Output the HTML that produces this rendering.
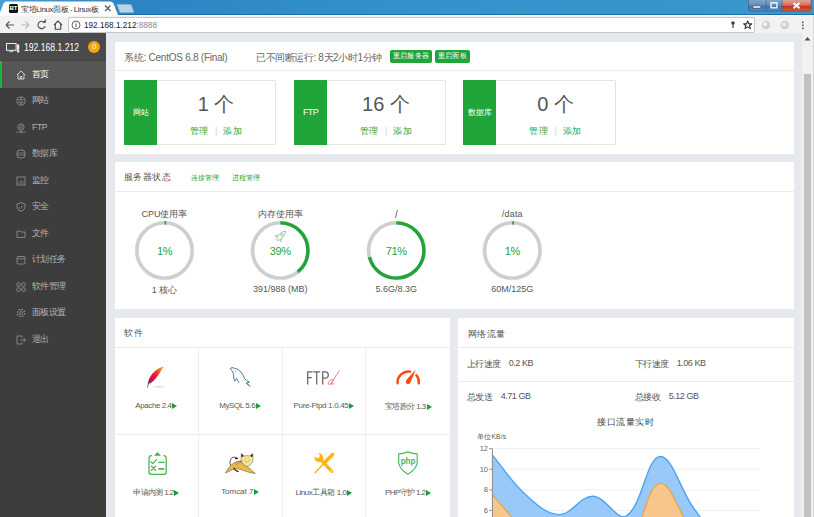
<!DOCTYPE html>
<html><head><meta charset="utf-8">
<style>
*{box-sizing:border-box;margin:0;padding:0}
html,body{width:814px;height:517px;overflow:hidden;background:#e6e9ee;font-family:"Liberation Sans",sans-serif;}
.a{position:absolute;white-space:nowrap}
#title{position:absolute;left:0;top:0;width:814px;height:15px;background:linear-gradient(90deg,#4c9cd4 0,#2d84c3 130px,#3493ca 420px,#3898cd 814px);border-bottom:1px solid #1e6fa5}
#toolbar{position:absolute;left:0;top:14.5px;width:814px;height:18.5px;background:#f2f2f2;border-top:1px solid #fafafa}
#addr{position:absolute;left:68px;top:17px;width:687px;height:16px;background:#fff;border:1px solid #c6c6c6;border-radius:2px}
#side{position:absolute;left:0;top:33px;width:106px;height:484px;background:#3d3d3d}
#sidehead{position:absolute;left:0;top:0;width:106px;height:28px;background:#4a4a4a;border-bottom:1px solid #444}
.mi{position:absolute;left:0;width:106px;height:26.5px;color:#b4b4b4;font-size:8.5px;letter-spacing:-0.75px}
.mi span{position:absolute;left:32px;top:7.8px}
.mi svg{position:absolute;left:16px;top:8.5px}
.card{position:absolute;background:#fff}
.hdiv{position:absolute;left:0;right:0;height:1px;background:#ebebeb}
.green{color:#20a53a}
.btn{position:absolute;background:#20a53a;color:#fff;font-size:7px;letter-spacing:0.3px;border-radius:2px;text-align:center;line-height:12.5px;height:12.5px;top:50.2px}
.stat{position:absolute;top:80px;width:152px;height:65px;border:1px solid #e4e4e4;border-radius:1px;background:#fff}
.stat .g{position:absolute;left:-1px;top:-1px;width:33px;height:65px;background:#20a53a;color:#fff;font-size:8px;letter-spacing:0px;text-align:center;line-height:65px}
.stat .n{position:absolute;left:32px;right:0;top:10px;text-align:center;font-size:20px;color:#555}
.stat .l{position:absolute;left:32px;right:0;top:44px;text-align:center;font-size:9px;letter-spacing:0.5px;color:#20a53a}
.gauge{position:absolute;top:221px;width:59px;height:59px}
.glbl{position:absolute;width:116px;text-align:center;font-size:9px;color:#555}
.gpct{position:absolute;width:116px;text-align:center;font-size:11px;color:#20a53a;letter-spacing:-0.35px}
.sw{position:absolute;width:83.75px;height:87.2px;border-right:1px solid #efeef8;border-bottom:1px solid #ecebf3}
.sw.r2 .t{top:52.2px}
.sw .t{position:absolute;left:0;right:0;top:53px;text-align:center;font-size:8px;color:#5a5a5a}
.tri{display:inline-block;width:0;height:0;margin-left:0.8px;border-left:5.8px solid #1a9f35;border-top:3.4px solid transparent;border-bottom:3.4px solid transparent;vertical-align:-1px}
.net{position:absolute;font-size:8.5px;color:#555;letter-spacing:-0.3px}
</style></head><body>

<!-- browser chrome -->
<div id="title"></div>
<svg class="a" style="left:0;top:0" width="814" height="15">
  <path d="M-1 15 L3.5 3.5 Q4.5 1.5 7 1.5 L110 1.5 Q112.5 1.5 113.5 3.5 L118 15 Z" fill="#fff"/>
  <path d="M117 4.5 L131 4.5 L134 12.5 L120 12.5 Z" fill="#b9d3ea" stroke="#8fb5d6" stroke-width="0.7"/>
  <defs>
<linearGradient id="wb" x1="0" y1="0" x2="0" y2="1"><stop offset="0" stop-color="#7fa6cc"/><stop offset="0.5" stop-color="#5f8cb8"/><stop offset="0.55" stop-color="#3f73a8"/><stop offset="1" stop-color="#4f86bc"/></linearGradient>
<linearGradient id="wr" x1="0" y1="0" x2="0" y2="1"><stop offset="0" stop-color="#e0a396"/><stop offset="0.5" stop-color="#d26a58"/><stop offset="0.55" stop-color="#c2321d"/><stop offset="1" stop-color="#d8553a"/></linearGradient>
</defs>
<path d="M748 0 V9.5 Q748 11.5 750 11.5 H809.5 Q811.5 11.5 811.5 9.5 V0 Z" fill="#3b5f86"/>
<rect x="748.7" y="0" width="17" height="10.8" fill="url(#wb)"/>
<rect x="766.4" y="0" width="15.4" height="10.8" fill="url(#wb)"/>
<rect x="782.4" y="0" width="28.4" height="10.8" fill="url(#wr)"/>
<rect x="753" y="6" width="7.5" height="2" fill="#fff" stroke="#333" stroke-width="0.4"/>
<rect x="771" y="2.8" width="6" height="5" fill="none" stroke="#fff" stroke-width="1.3"/>
<path d="M793.5 3 L799.5 8.3 M799.5 3 L793.5 8.3" stroke="#fff" stroke-width="1.9"/>
</svg>
<div class="a" style="left:9px;top:3.5px;width:9px;height:9px;background:#111;border-radius:1.5px;color:#fff;font-size:6px;font-weight:bold;line-height:9px;text-align:center">BT</div>
<div class="a" style="left:21px;top:3.6px;font-size:8px;color:#333;letter-spacing:-0.45px">宝塔Linux面板 - Linux板</div>
<svg class="a" style="left:103px;top:3px" width="10" height="10"><path d="M2 2.5 L7.5 8 M7.5 2.5 L2 8" stroke="#555" stroke-width="1.1"/></svg>

<div id="toolbar"></div>
<svg class="a" style="left:0;top:15px" width="68" height="18">
  <path d="M6 10 L14 10 M6 10 L9.5 6.5 M6 10 L9.5 13.5" stroke="#555" stroke-width="1.2" fill="none"/>
  <path d="M29 10 L21 10 M29 10 L25.5 6.5 M29 10 L25.5 13.5" stroke="#bbb" stroke-width="1.2" fill="none"/>
  <path d="M44.6 7.6 A3.7 3.7 0 1 0 45.2 11.2" stroke="#555" stroke-width="1.2" fill="none"/>
  <path d="M42.2 7.8 L45.9 7.8 L45.9 4.1 Z" fill="#555"/>
  <path d="M54 10 L58 6 L62 10 M55.3 9 L55.3 14.3 L60.7 14.3 L60.7 9" stroke="#444" stroke-width="1.1" fill="none"/>
</svg>
<div id="addr"></div>
<svg class="a" style="left:71px;top:20px" width="10" height="10"><circle cx="5" cy="5" r="4" fill="none" stroke="#555" stroke-width="0.9"/><rect x="4.5" y="4" width="1" height="3.2" fill="#555"/><rect x="4.5" y="2.5" width="1" height="0.9" fill="#555"/></svg>
<div class="a" style="left:84px;top:19.1px;font-size:9.6px;color:#222;transform:scaleX(0.855);transform-origin:0 0">192.168.1.212<span style="color:#888">:8888</span></div>
<svg class="a" style="left:725px;top:18px" width="89" height="14">
  <circle cx="8" cy="5" r="1.8" fill="#444"/><rect x="7.4" y="5" width="1.2" height="5" fill="#444"/>
  <path d="M22.7 3 L23.8 5.9 L26.8 5.9 L24.5 7.7 L25.4 10.6 L22.7 8.9 L20 10.6 L20.9 7.7 L18.6 5.9 L21.6 5.9 Z" fill="none" stroke="#333" stroke-width="1.1" stroke-linejoin="round"/>
  <circle cx="41" cy="7" r="4.3" fill="#cfcfcf"/><circle cx="40" cy="6" r="2" fill="#f5f5f5"/>
  <circle cx="59.7" cy="7" r="4.3" fill="#cfcfcf"/><circle cx="59" cy="6.5" r="2.2" fill="#e8e8e8"/>
  <rect x="77" y="3.5" width="1.6" height="1.6" fill="#555"/><rect x="77" y="6.5" width="1.6" height="1.6" fill="#555"/><rect x="77" y="9.5" width="1.6" height="1.6" fill="#555"/>
</svg>
<div class="a" style="left:813px;top:15px;width:1px;height:502px;background:#d8d8d8"></div>

<!-- sidebar -->
<div id="side">
  <div id="sidehead">
    <svg class="a" style="left:6px;top:9.6px" width="14" height="10"><rect x="0.5" y="0.5" width="9.6" height="6.8" fill="none" stroke="#eee" stroke-width="1"/><rect x="3.4" y="8.2" width="3.8" height="0.9" fill="#ddd"/><rect x="11" y="1.4" width="2.2" height="8" fill="#eee"/><rect x="11.7" y="6.5" width="0.8" height="0.8" fill="#4a4a4a"/></svg>
    <div class="a" style="left:24px;top:8.6px;font-size:10px;color:#fff;transform:scaleX(0.86);transform-origin:0 0">192.168.1.212</div>
    <div class="a" style="left:88.3px;top:8px;width:12px;height:12px;border-radius:6px;background:#f7a30c;color:#fff;font-size:7.5px;line-height:12px;text-align:center">0</div>
  </div>
  <div class="mi" style="top:28px;background:#565656;color:#fff;border-left:2px solid #1fb53b"><svg width="10" height="10" style="left:14px"><path d="M1 5 L5 1 L9 5 M2 4.3 L2 9 L8 9 L8 4.3 M4.2 9 L4.2 6.5 L5.8 6.5 L5.8 9" fill="none" stroke="#ddd" stroke-width="0.9"/></svg><span style="left:30px">首页</span></div>
  <div class="mi" style="top:54.5px"><svg width="10" height="10"><circle cx="5" cy="5" r="4.1" fill="none" stroke="#8c8c8c" stroke-width="0.85"/><path d="M1.2 3.6 H8.8 M1.2 6.4 H8.8 M5 0.9 Q2.6 5 5 9.1 M5 0.9 Q7.4 5 5 9.1" fill="none" stroke="#8c8c8c" stroke-width="0.6"/></svg><span>网站</span></div>
  <div class="mi" style="top:81px"><svg width="10" height="10"><circle cx="5" cy="4" r="3.2" fill="none" stroke="#8c8c8c" stroke-width="0.8"/><path d="M2 3 H8 M2 5 H8 M5 0.8 V7.2" fill="none" stroke="#8c8c8c" stroke-width="0.55"/><path d="M0.3 9 H9.7" stroke="#8c8c8c" stroke-width="0.8"/><circle cx="5" cy="9" r="0.9" fill="#8c8c8c"/></svg><span style="letter-spacing:-0.3px">FTP</span></div>
  <div class="mi" style="top:107.5px"><svg width="10" height="10"><rect x="1" y="1" width="8" height="8" rx="3" fill="none" stroke="#8c8c8c" stroke-width="0.9"/><path d="M1 4 L9 4 M1 6 L9 6" stroke="#8c8c8c" stroke-width="0.7"/></svg><span>数据库</span></div>
  <div class="mi" style="top:134px"><svg width="10" height="10"><rect x="1" y="1" width="8" height="8" fill="none" stroke="#8c8c8c" stroke-width="0.9"/><path d="M3 6 L3 8 M5 4 L5 8 M7 5 L7 8" stroke="#8c8c8c" stroke-width="0.8"/></svg><span>监控</span></div>
  <div class="mi" style="top:160.5px"><svg width="10" height="10"><path d="M5 0.7 L9 2 L9 5 Q9 8 5 9.5 Q1 8 1 5 L1 2 Z" fill="none" stroke="#8c8c8c" stroke-width="0.9"/><path d="M3 5 L4.5 6.5 L7 3.8" fill="none" stroke="#8c8c8c" stroke-width="0.8"/></svg><span>安全</span></div>
  <div class="mi" style="top:187px"><svg width="10" height="10"><path d="M1 2 L4 2 L5 3 L9 3 L9 8.5 L1 8.5 Z" fill="none" stroke="#8c8c8c" stroke-width="0.9"/></svg><span>文件</span></div>
  <div class="mi" style="top:213.5px"><svg width="10" height="10"><rect x="1" y="1.5" width="8" height="7.5" rx="1" fill="none" stroke="#8c8c8c" stroke-width="0.9"/><path d="M1 3.8 L9 3.8" stroke="#8c8c8c" stroke-width="0.8"/></svg><span>计划任务</span></div>
  <div class="mi" style="top:240px"><svg width="10" height="10"><rect x="0.8" y="0.8" width="3.4" height="3.4" rx="1" fill="none" stroke="#8c8c8c" stroke-width="0.9"/><rect x="5.8" y="0.8" width="3.4" height="3.4" rx="1" fill="none" stroke="#8c8c8c" stroke-width="0.9"/><rect x="0.8" y="5.8" width="3.4" height="3.4" rx="1" fill="none" stroke="#8c8c8c" stroke-width="0.9"/><rect x="5.8" y="5.8" width="3.4" height="3.4" rx="1" fill="none" stroke="#8c8c8c" stroke-width="0.9"/></svg><span>软件管理</span></div>
  <div class="mi" style="top:266.5px"><svg width="10" height="10"><circle cx="5" cy="5" r="3.6" fill="none" stroke="#8c8c8c" stroke-width="1.4" stroke-dasharray="1.6 1.2"/><circle cx="5" cy="5" r="1.5" fill="none" stroke="#8c8c8c" stroke-width="0.8"/></svg><span>面板设置</span></div>
  <div class="mi" style="top:293px"><svg width="10" height="10"><path d="M6 2.5 L6 1 L1 1 L1 9 L6 9 L6 7.5 M4 5 L9.5 5 M7.5 3 L9.5 5 L7.5 7" fill="none" stroke="#8c8c8c" stroke-width="0.9"/></svg><span>退出</span></div>
</div>

<!-- card 1 -->
<div class="card" style="left:115px;top:42px;width:679px;height:112px">
  <div class="hdiv" style="top:28px"></div>
</div>
<div class="a" style="left:124px;top:50.9px;font-size:10px;color:#666;letter-spacing:-0.25px">系统: CentOS 6.8 (Final)</div>
<div class="a" style="left:256px;top:50.9px;font-size:10px;color:#666;letter-spacing:-0.4px">已不间断运行: 8天2小时1分钟</div>
<div class="btn" style="left:390px;width:42px">重启服务器</div>
<div class="btn" style="left:435px;width:35px">重启面板</div>

<div class="stat" style="left:124px"><div class="g">网站</div><div class="n">1 个</div><div class="l">管理<span style="color:#d0d0d0;margin:0 5.5px 0 6.5px">|</span>添加</div></div>
<div class="stat" style="left:294px"><div class="g" style="font-size:9px;letter-spacing:-0.6px">FTP</div><div class="n">16 个</div><div class="l">管理<span style="color:#d0d0d0;margin:0 5.5px 0 6.5px">|</span>添加</div></div>
<div class="stat" style="left:463px;width:153px"><div class="g">数据库</div><div class="n">0 个</div><div class="l">管理<span style="color:#d0d0d0;margin:0 5.5px 0 6.5px">|</span>添加</div></div>

<!-- card 2 -->
<div class="card" style="left:115px;top:162px;width:679px;height:147px">
  <div class="hdiv" style="top:29px"></div>
</div>
<div class="a" style="left:124px;top:171px;font-size:9px;color:#555;letter-spacing:0.45px">服务器状态</div>
<div class="a green" style="left:191px;top:173px;font-size:7px">连接管理</div>
<div class="a green" style="left:232px;top:173px;font-size:7px">进程管理</div>

<div class="glbl" style="left:106.5px;top:207.7px">CPU使用率</div>
<div class="glbl" style="left:222.3px;top:207.7px">内存使用率</div>
<div class="glbl" style="left:338.3px;top:208.5px;font-size:10px">/</div>
<div class="glbl" style="left:454.3px;top:208.5px;letter-spacing:0.2px">/data</div>

<svg class="a" style="left:0;top:0" width="814" height="517" pointer-events="none">
  <g fill="none" stroke="#a6d9ad" stroke-width="0.5" stroke-opacity="0.8"><circle cx="164.5" cy="250.5" r="29.4"/><circle cx="280.3" cy="250.5" r="29.4"/><circle cx="396.3" cy="250.5" r="29.4"/><circle cx="512.3" cy="250.5" r="29.4"/></g>
  <g fill="none" stroke-width="3.4">
    <circle cx="164.5" cy="250.5" r="27.6" stroke="#cecece"/>
    <circle cx="280.3" cy="250.5" r="27.6" stroke="#cecece"/>
    <circle cx="396.3" cy="250.5" r="27.6" stroke="#cecece"/>
    <circle cx="512.3" cy="250.5" r="27.6" stroke="#cecece"/>
    <circle cx="164.5" cy="250.5" r="27.6" stroke="#20a53a" stroke-dasharray="1.7 200" transform="rotate(-90 164.5 250.5)"/>
    <circle cx="280.3" cy="250.5" r="27.6" stroke="#20a53a" stroke-dasharray="67.6 200" transform="rotate(-90 280.3 250.5)"/>
    <circle cx="396.3" cy="250.5" r="27.6" stroke="#20a53a" stroke-dasharray="123.1 200" transform="rotate(-90 396.3 250.5)"/>
    <circle cx="512.3" cy="250.5" r="27.6" stroke="#20a53a" stroke-dasharray="1.7 200" transform="rotate(-90 512.3 250.5)"/>
  </g>
  <g transform="translate(280.6,236.2) rotate(45)" fill="none" stroke="#86cf94" stroke-width="0.9" stroke-linejoin="round">
    <path d="M0 -7.2 Q2.6 -4.6 2.4 0.2 L2.2 3.4 H-2.2 L-2.4 0.2 Q-2.6 -4.6 0 -7.2 Z"/>
    <circle cx="0" cy="-2" r="1.1"/>
    <path d="M-2.3 0.8 L-4 3.8 L-2.2 3.6 M2.3 0.8 L4 3.8 L2.2 3.6 M-0.9 4.6 V6.4 M0.9 4.6 V6.4"/>
  </g>
</svg>
<div class="gpct" style="left:106.5px;top:245px">1%</div>
<div class="gpct" style="left:222.3px;top:245px">39%</div>
<div class="gpct" style="left:338.3px;top:245px">71%</div>
<div class="gpct" style="left:454.3px;top:245px">1%</div>
<div class="glbl" style="left:106.5px;top:283.5px">1 核心</div>
<div class="glbl" style="left:222.3px;top:283.5px">391/988 (MB)</div>
<div class="glbl" style="left:338.3px;top:283.5px">5.6G/8.3G</div>
<div class="glbl" style="left:454.3px;top:283.5px">60M/125G</div>

<!-- card 3 software -->
<div class="card" style="left:115px;top:318px;width:335px;height:199px;overflow:hidden">
  <div class="hdiv" style="top:29px"></div>
  <div class="a" style="left:9px;top:9px;font-size:9px;color:#555;letter-spacing:0.5px">软件</div>
  <div class="sw" style="left:0;top:29.5px"><div class="t"><span style="letter-spacing:-0.410px">Apache 2.4</span><i class="tri"></i></div></div>
  <div class="sw" style="left:83.75px;top:29.5px"><div class="t"><span style="letter-spacing:-0.422px">MySQL 5.6</span><i class="tri"></i></div></div>
  <div class="sw" style="left:167.5px;top:29.5px"><div class="t"><span style="letter-spacing:-0.319px">Pure-Ftpd 1.0.45</span><i class="tri"></i></div></div>
  <div class="sw" style="left:251.25px;top:29.5px;border-right:none"><div class="t"><span style="letter-spacing:-0.537px">宝塔跑分 1.3</span><i class="tri"></i></div></div>
  <div class="sw r2" style="left:0;top:116.7px"><div class="t"><span style="letter-spacing:-0.650px">申请内测 1.2</span><i class="tri"></i></div></div>
  <div class="sw r2" style="left:83.75px;top:116.7px"><div class="t"><span style="letter-spacing:-0.038px">Tomcat 7</span><i class="tri"></i></div></div>
  <div class="sw r2" style="left:167.5px;top:116.7px"><div class="t"><span style="letter-spacing:-0.458px">Linux工具箱 1.0</span><i class="tri"></i></div></div>
  <div class="sw r2" style="left:251.25px;top:116.7px;border-right:none"><div class="t"><span style="letter-spacing:-0.589px">PHP守护 1.2</span><i class="tri"></i></div></div>
</div>

<!-- card 4 network -->
<div class="card" style="left:458px;top:318px;width:336px;height:199px;overflow:hidden">
  <div class="hdiv" style="top:29px"></div>
  <div class="hdiv" style="top:62.5px"></div>
  <div class="a" style="left:9.5px;top:10px;font-size:9px;color:#555;letter-spacing:0.6px">网络流量</div>
</div>
<div class="net" style="left:467px;top:358.3px;font-size:9px;letter-spacing:-0.7px">上行速度</div>
<div class="net" style="left:508.7px;top:358.2px;font-size:9px;letter-spacing:-0.45px">0.2 KB</div>
<div class="net" style="left:635px;top:358.3px;font-size:9px;letter-spacing:-0.7px">下行速度</div>
<div class="net" style="left:676.7px;top:358.2px;font-size:9px;letter-spacing:-0.45px">1.06 KB</div>
<div class="net" style="left:467px;top:391.3px;font-size:9px;letter-spacing:-0.7px">总发送</div>
<div class="net" style="left:500.7px;top:391.2px;font-size:9px;letter-spacing:-0.45px">4.71 GB</div>
<div class="net" style="left:635px;top:391.3px;font-size:9px;letter-spacing:-0.7px">总接收</div>
<div class="net" style="left:668.7px;top:391.2px;font-size:9px;letter-spacing:-0.45px">5.12 GB</div>
<div class="a" style="left:597px;top:415.8px;font-size:9px;color:#444;letter-spacing:0.6px">接口流量实时</div>
<div class="a" style="left:477px;top:433px;font-size:6.5px;color:#555;letter-spacing:0.25px">单位KB/s</div>

<!--ICONS--><svg class="a" style="left:0;top:0" width="814" height="517">
<defs>
 <linearGradient id="fg" x1="0" y1="1" x2="1" y2="0">
  <stop offset="0" stop-color="#6e1a5c"/><stop offset="0.22" stop-color="#c8124a"/><stop offset="0.45" stop-color="#e8173a"/><stop offset="0.7" stop-color="#ef5a2a"/><stop offset="0.88" stop-color="#f3a232"/><stop offset="1" stop-color="#f2dc50"/>
 </linearGradient>
 <radialGradient id="sh"><stop offset="0" stop-color="#cfd1c4"/><stop offset="1" stop-color="#fff" stop-opacity="0"/></radialGradient>
</defs>
<!-- apache -->
<ellipse cx="158.8" cy="386.8" rx="10.5" ry="2.2" fill="url(#sh)"/>
<path d="M147.3 387.6 L148.6 383" stroke="#8a8a8a" stroke-width="1.2"/>
<path d="M148 383.9 C148.4 378.6 151.6 373.6 156.2 370 C158.8 368 161.4 366.9 164 366.2 C162.4 368.6 160.4 372.2 157.6 376 C154.8 380 151.8 383.2 148 383.9 Z" fill="url(#fg)"/>
<!-- mysql dolphin -->
<g fill="none" stroke="#46758f" stroke-width="0.95" stroke-linecap="round" stroke-linejoin="round">
<path d="M230.4 368.3 Q231.8 366.6 234.2 368.2 Q238.3 368.8 241.2 372.2 Q243.4 375 244.6 378.6 Q245.8 380.4 249.4 382.2 L246.4 383.1 L250.3 386.3"/>
<path d="M230.4 368.3 Q232.8 371.2 233.7 374.6 Q233.2 378.2 234.6 381.2 Q236 380.6 236.3 378.4 L238.8 382.3"/>
<path d="M246.8 383.4 Q247.5 385 248.3 385.2"/>
</g>
<circle cx="235.2" cy="371.2" r="0.5" fill="#46758f"/>
<!-- FTPd -->
<g fill="none" stroke="#666" stroke-width="1.25">
<path d="M307.7 384.4 V371.9 H312.4 M307.7 377.6 H311.8"/>
<path d="M313.2 371.9 H320.3 M316.7 371.9 V384.4"/>
<path d="M322.7 384.4 V371.9 H325.2 Q328.3 371.9 328.3 375 Q328.3 378.2 325.2 378.2 H322.7"/>
</g>
<g fill="none" stroke="#ff5a6a" stroke-width="0.85" stroke-linecap="round">
<path d="M339.2 370.8 Q335 376.5 331.3 384.2 Q331.8 384.9 333.4 383.6"/>
<path d="M333.6 379.5 Q330.2 379 328.4 382.4 Q327.6 384.7 329.5 384.4 Q330.8 383.9 332 381.8"/>
</g>
<!-- speedometer -->
<g fill="none" stroke="#fc4a10" stroke-width="2.4" stroke-linecap="round">
<path d="M397.6 383.3 A11 11 0 0 1 410.3 371.6"/>
<path d="M416.4 375.2 A11 11 0 0 1 418.8 383.3"/>
</g>
<path d="M415.8 369.4 L410.6 382.2 Q409.4 384.6 407.4 384.2 Q405.4 383.4 405.9 381 Q406.2 380.2 406.8 379.6 Z" fill="#fc4a10"/>
<!-- clipboard -->
<g fill="none" stroke="#45b54d" stroke-width="1.25" stroke-linecap="round" stroke-linejoin="round">
<path d="M151.5 455.6 Q149 455.8 149 458.3 V472.2 Q149 474.3 151.2 474.3 H164 Q166.2 474.3 166.2 472.2 V458.3 Q166.2 455.8 163.8 455.6"/>
<path d="M150.8 461.8 L152.9 463.6 L156.5 459.7"/>
<path d="M158.6 462.3 H164.2"/>
<path d="M151.4 466.3 L155.5 470.3 M155.5 466.3 L151.4 470.3"/>
</g>
<path d="M158.4 468.9 H164.3" stroke="#45b54d" stroke-width="1.7"/>
<path d="M154 455.8 L157.4 452 L161 455.8 Z" fill="#45b54d"/>
<!-- tomcat -->
<path d="M231 466.2 Q228.4 461 232.2 457.5 Q234.8 456.4 236.8 458" fill="none" stroke="#222" stroke-width="0.75"/>
<ellipse cx="236.5" cy="458.3" rx="1.6" ry="0.85" fill="#222"/>
<path d="M225.4 472.8 Q228.6 467 232.8 463.6 Q236.8 460.8 241.6 460.6 L247 466.4 Q251.6 469.8 255.3 473.5 Q249 472.8 243.6 470.6 Q239.6 468.9 236.6 468.8 Q232.6 469 229.8 471 Q227.6 472.4 225.4 472.8 Z" fill="#e8b848" stroke="#4a3a18" stroke-width="0.45"/>
<path d="M233.6 467.8 Q235 470.6 238.6 471.6" fill="none" stroke="#222" stroke-width="1.1"/>
<path d="M236 463.4 L237 464.6 M238.2 462.2 L239 463.6 M240.3 461.4 L240.8 462.8" stroke="#3a3a3a" stroke-width="0.6"/>
<path d="M241.3 453.6 L243.8 456 Q247 455.2 250.2 456 L252.7 453.6 Q253.6 459 252.3 462.4 Q250.2 465.6 247.1 466.6 Q244 465.6 242 462.4 Q240.6 459 241.3 453.6 Z" fill="#f7e792" stroke="#444" stroke-width="0.45"/>
<path d="M241.3 453.6 L243.8 456 L241.6 457.2 Z M252.7 453.6 L250.2 456 L252.4 457.2 Z" fill="#1a1a1a"/>
<path d="M244.4 459.6 Q247 465 249.8 459.6 M245.6 458.3 L246.2 459 M248.4 458.3 L247.8 459" fill="none" stroke="#9a8a50" stroke-width="0.55"/>
<!-- tools -->
<g stroke="#fdb516" stroke-linecap="round" fill="none">
<path d="M332.6 454.6 L325.2 462" stroke-width="3.6"/>
<path d="M325.2 462 L315.4 472.6" stroke-width="1.5"/>
<path d="M321.6 460.6 L331.6 471.2" stroke-width="3.4"/>
</g>
<path d="M314.3 456.4 Q314.2 461 318.5 462 Q321 462.2 323 460.8 Q324.2 458.4 322.6 455.2 Q321 453.2 318.3 453.2 L320 456 L318.6 458.2 Q316.4 458.4 314.3 456.4 Z" fill="#fdb516"/>
<circle cx="331.2" cy="470.8" r="0.8" fill="#fff"/>
<!-- php shield -->
<path d="M407.9 451.9 Q403 453.8 398.7 453.9 V462.6 Q399.8 469.6 407.9 474.2 Q416 469.6 417.2 462.6 V453.9 Q412.8 453.8 407.9 451.9 Z" fill="none" stroke="#4bb858" stroke-width="1.15" stroke-linejoin="round"/>
<text x="408" y="463.6" text-anchor="middle" font-family="Liberation Sans, sans-serif" font-weight="bold" font-size="8.2" fill="#4bb858" letter-spacing="-0.2">php</text>
</svg><!--/ICONS-->
<!--CHART--><svg class="a" style="left:0;top:0" width="814" height="517" font-family="Liberation Sans, sans-serif">
<defs><clipPath id="cc"><rect x="458" y="440" width="336" height="77"/></clipPath></defs>
<g clip-path="url(#cc)"><path d="M492.4 448.7 H760" stroke="#efefef" stroke-width="1"/><path d="M492.4 469.2 H760" stroke="#efefef" stroke-width="1"/><path d="M492.4 489.8 H760" stroke="#efefef" stroke-width="1"/><path d="M492.4 510.4 H760" stroke="#efefef" stroke-width="1"/>
<path d="M492.4 455.1 C505.1 470.2 511.3 482.0 525.9 494.9 C536.7 504.6 546.5 514.3 559.3 514.6 C571.9 514.8 580.2 495.9 592.8 496.2 C605.6 496.4 617.0 521.5 626.2 516.0 C642.4 506.4 646.2 458.4 659.6 456.6 C671.6 455.0 679.8 488.4 693.1 507.3 C705.2 524.5 713.8 534.7 726.5 551.5 L726.5 560 L492.4 560 Z" fill="#8fc4f8" fill-opacity="0.92"/>
<path d="M492.4 495.2 C505.1 508.8 511.8 519.1 525.9 530.9 C537.2 540.4 545.6 548.3 559.3 551.5 C571.1 554.2 580.0 547.1 592.8 546.3 C605.4 545.5 618.1 554.9 626.2 547.3 C643.6 531.1 645.7 486.8 659.6 483.5 C671.1 480.9 678.7 515.1 693.1 531.9 C704.1 544.8 713.8 550.4 726.5 561.7 L726.5 560 L492.4 560 Z" fill="#fdc585" fill-opacity="0.95"/>
<path d="M492.4 455.1 C505.1 470.2 511.3 482.0 525.9 494.9 C536.7 504.6 546.5 514.3 559.3 514.6 C571.9 514.8 580.2 495.9 592.8 496.2 C605.6 496.4 617.0 521.5 626.2 516.0 C642.4 506.4 646.2 458.4 659.6 456.6 C671.6 455.0 679.8 488.4 693.1 507.3 C705.2 524.5 713.8 534.7 726.5 551.5" fill="none" stroke="#4ba3f3" stroke-width="1.4"/>
<path d="M492.4 495.2 C505.1 508.8 511.8 519.1 525.9 530.9 C537.2 540.4 545.6 548.3 559.3 551.5 C571.1 554.2 580.0 547.1 592.8 546.3 C605.4 545.5 618.1 554.9 626.2 547.3 C643.6 531.1 645.7 486.8 659.6 483.5 C671.1 480.9 678.7 515.1 693.1 531.9 C704.1 544.8 713.8 550.4 726.5 561.7" fill="none" stroke="#f0a23c" stroke-width="1.2"/>
<path d="M492.4 448.7 V517" stroke="#8a8a8a" stroke-width="1"/><path d="M489 448.7 H492.4" stroke="#8a8a8a" stroke-width="0.9"/><path d="M489 469.2 H492.4" stroke="#8a8a8a" stroke-width="0.9"/><path d="M489 489.8 H492.4" stroke="#8a8a8a" stroke-width="0.9"/><path d="M489 510.4 H492.4" stroke="#8a8a8a" stroke-width="0.9"/></g>
<text x="488" y="451.3" text-anchor="end" font-size="7.5" fill="#666">12</text><text x="488" y="471.9" text-anchor="end" font-size="7.5" fill="#666">10</text><text x="488" y="492.4" text-anchor="end" font-size="7.5" fill="#666">8</text><text x="488" y="513.0" text-anchor="end" font-size="7.5" fill="#666">6</text>
</svg><!--/CHART-->
<!-- scrollbar -->
<div class="a" style="left:802px;top:32.5px;width:11px;height:485px;background:#f1f1f1"></div>
<div class="a" style="left:804px;top:73.5px;width:7px;height:444px;background:#c1c1c1"></div>
<svg class="a" style="left:802px;top:35px" width="11" height="8"><path d="M2.5 5.5 L5.5 2 L8.5 5.5 Z" fill="#505050"/></svg>
</body></html>
